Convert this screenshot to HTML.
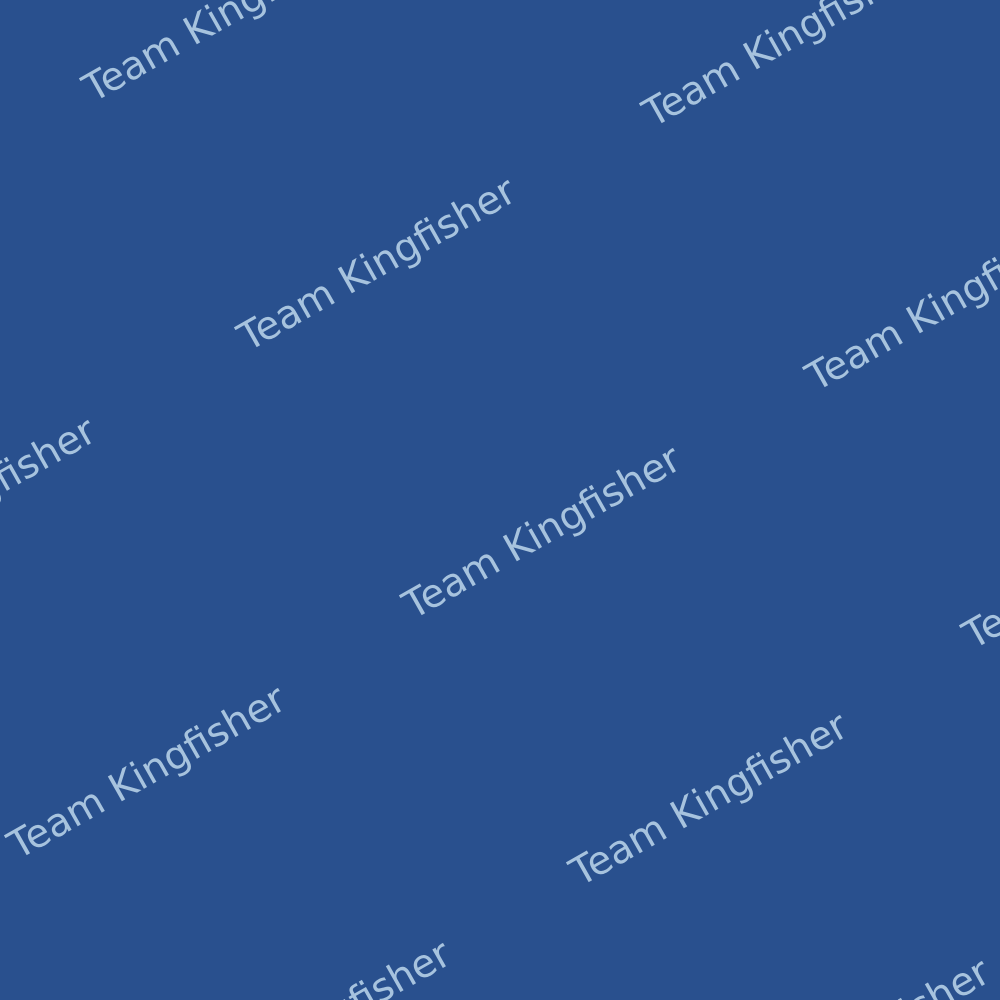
<!DOCTYPE html>
<html><head><meta charset="utf-8"><style>
html,body{margin:0;padding:0;width:1000px;height:1000px;overflow:hidden;background:#29508e}
svg{display:block;overflow:hidden}
text{font-family:"DejaVu Sans","Liberation Sans",sans-serif;font-size:39px;fill:#a7c3de}
</style></head><body>
<svg width="1000" height="1000" viewBox="0 0 1000 1000">
<rect width="1000" height="1000" fill="#29508e"/>
<g>
<text transform="translate(93,103) rotate(-29.5)">Team Kingfisher</text>
<text transform="translate(653,128) rotate(-29.5)">Team Kingfisher</text>
<text transform="translate(248,352) rotate(-29.5)">Team Kingfisher</text>
<text transform="translate(816,392) rotate(-29.5)">Team Kingfisher</text>
<text transform="translate(-172,592) rotate(-29.5)">Team Kingfisher</text>
<text transform="translate(413,620) rotate(-29.5)">Team Kingfisher</text>
<text transform="translate(973,650) rotate(-29.5)">Team Kingfisher</text>
<text transform="translate(18,860) rotate(-29.5)">Team Kingfisher</text>
<text transform="translate(580,887) rotate(-29.5)">Team Kingfisher</text>
<text transform="translate(183,1115) rotate(-29.5)">Team Kingfisher</text>
<text transform="translate(722,1133) rotate(-29.5)">Team Kingfisher</text>
<text transform="translate(488,-140) rotate(-29.5)">Team Kingfisher</text>
<text transform="translate(-72,-165) rotate(-29.5)">Team Kingfisher</text>
<text transform="translate(-312,325) rotate(-29.5)">Team Kingfisher</text>
</g>
</svg>
</body></html>
